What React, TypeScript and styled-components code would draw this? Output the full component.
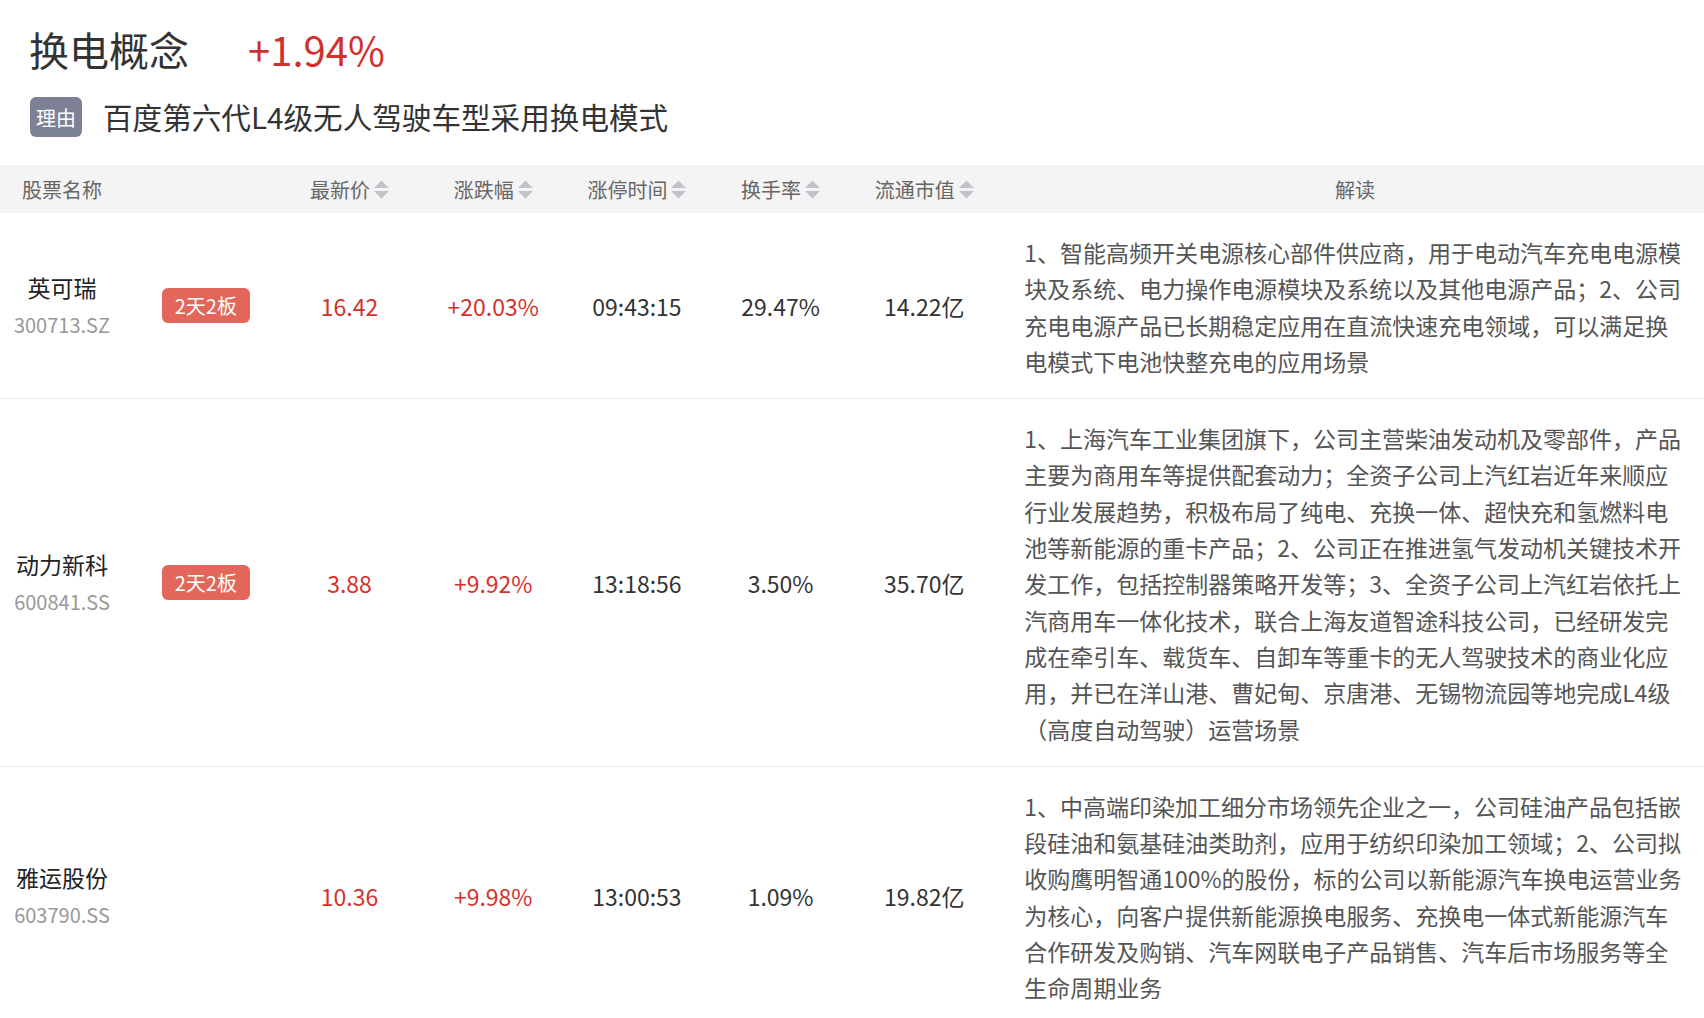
import React from "react";
import styled, { createGlobalStyle } from "styled-components";

const GlobalStyle = createGlobalStyle`
  html, body {
    margin: 0;
    padding: 0;
    overflow: hidden;
    background: #ffffff;
  }
  body {
    font-family: "Noto Sans CJK SC", "Noto Sans", sans-serif;
    color: #333333;
  }
`;

const COLS = "134px repeat(6, 143.7px) 1fr";

const Page = styled.div`
  width: 1704px;
`;

const Top = styled.div`
  padding: 21px 0 0 30px;
`;

const TitleRow = styled.div`
  display: flex;
  align-items: center;
  height: 56px;
`;

const Title = styled.h1`
  margin: 0 0 0 -1px;
  font-size: 40px;
  font-weight: 400;
  line-height: 56px;
  color: #333333;
`;

const Change = styled.span`
  margin-left: 59px;
  font-size: 40px;
  line-height: 56px;
  color: #d0312d;
`;

const ReasonRow = styled.div`
  display: flex;
  align-items: center;
  gap: 21px;
  margin-top: 20px;
  height: 40px;
`;

const ReasonTag = styled.span`
  display: inline-flex;
  align-items: center;
  justify-content: center;
  width: 52px;
  height: 40px;
  border-radius: 6px;
  background: #7d8196;
  color: #ffffff;
  font-size: 20px;
`;

const ReasonText = styled.span`
  font-size: 29.6px;
  line-height: 40px;
  color: #333333;
`;

const Table = styled.div`
  margin-top: 28px;
`;

const HeadRow = styled.div`
  display: grid;
  grid-template-columns: ${COLS};
  height: 48px;
  background: #f4f4f4;
`;

const HeadCell = styled.div<{ $first?: boolean; $desc?: boolean }>`
  display: flex;
  align-items: center;
  justify-content: center;
  gap: 4px;
  font-size: 20px;
  color: #666666;
  padding: ${(p) => (p.$first ? "0 10px 0 0" : p.$desc ? "0 18px 0 28px" : "0")};
`;

const SortSvg = styled.svg`
  width: 15px;
  height: 19px;
  flex: none;
`;

const SortIcon = () => (
  <SortSvg viewBox="0 0 15 19">
    <polygon points="0,8 7.5,0.5 15,8" fill="#c0c3ca" />
    <polygon points="0,11 15,11 7.5,18.5" fill="#c0c3ca" />
  </SortSvg>
);

const Row = styled.div`
  display: grid;
  grid-template-columns: ${COLS};
  border-bottom: 1px solid #ebebeb;
`;

const NameCell = styled.div`
  display: flex;
  flex-direction: column;
  align-items: center;
  justify-content: center;
  padding-right: 10px;
`;

const Name = styled.div`
  font-size: 23px;
  line-height: 37px;
  color: #222222;
`;

const Code = styled.div`
  font-size: 20px;
  line-height: 37px;
  color: #999999;
`;

const TagCell = styled.div`
  display: flex;
  align-items: center;
  justify-content: center;
`;

const Tag = styled.span`
  display: inline-flex;
  align-items: center;
  justify-content: center;
  width: 88px;
  height: 35px;
  border-radius: 6px;
  background: #e3665b;
  color: #ffffff;
  font-size: 20px;
`;

const ValueCell = styled.div<{ $up?: boolean }>`
  display: flex;
  align-items: center;
  justify-content: center;
  font-size: 23px;
  color: ${(p) => (p.$up ? "#d4322d" : "#333333")};
`;

const DescCell = styled.div`
  padding: 21px 18px 19px 28px;
  font-size: 23px;
  line-height: 36.3px;
  color: #555555;
  text-align: left;
`;

type Stock = {
  name: string;
  code: string;
  tag?: string;
  price: string;
  change: string;
  time: string;
  turnover: string;
  cap: string;
  desc: string;
};

const stocks: Stock[] = [
  {
    name: "英可瑞",
    code: "300713.SZ",
    tag: "2天2板",
    price: "16.42",
    change: "+20.03%",
    time: "09:43:15",
    turnover: "29.47%",
    cap: "14.22亿",
    desc: "1、智能高频开关电源核心部件供应商，用于电动汽车充电电源模块及系统、电力操作电源模块及系统以及其他电源产品；2、公司充电电源产品已长期稳定应用在直流快速充电领域，可以满足换电模式下电池快整充电的应用场景",
  },
  {
    name: "动力新科",
    code: "600841.SS",
    tag: "2天2板",
    price: "3.88",
    change: "+9.92%",
    time: "13:18:56",
    turnover: "3.50%",
    cap: "35.70亿",
    desc: "1、上海汽车工业集团旗下，公司主营柴油发动机及零部件，产品主要为商用车等提供配套动力；全资子公司上汽红岩近年来顺应行业发展趋势，积极布局了纯电、充换一体、超快充和氢燃料电池等新能源的重卡产品；2、公司正在推进氢气发动机关键技术开发工作，包括控制器策略开发等；3、全资子公司上汽红岩依托上汽商用车一体化技术，联合上海友道智途科技公司，已经研发完成在牵引车、载货车、自卸车等重卡的无人驾驶技术的商业化应用，并已在洋山港、曹妃甸、京唐港、无锡物流园等地完成L4级（高度自动驾驶）运营场景",
  },
  {
    name: "雅运股份",
    code: "603790.SS",
    price: "10.36",
    change: "+9.98%",
    time: "13:00:53",
    turnover: "1.09%",
    cap: "19.82亿",
    desc: "1、中高端印染加工细分市场领先企业之一，公司硅油产品包括嵌段硅油和氨基硅油类助剂，应用于纺织印染加工领域；2、公司拟收购鹰明智通100%的股份，标的公司以新能源汽车换电运营业务为核心，向客户提供新能源换电服务、充换电一体式新能源汽车合作研发及购销、汽车网联电子产品销售、汽车后市场服务等全生命周期业务",
  },
];

const sortable = ["最新价", "涨跌幅", "涨停时间", "换手率", "流通市值"];

export default function App() {
  return (
    <Page>
      <GlobalStyle />
      <Top>
        <TitleRow>
          <Title>换电概念</Title>
          <Change>+1.94%</Change>
        </TitleRow>
        <ReasonRow>
          <ReasonTag>理由</ReasonTag>
          <ReasonText>百度第六代L4级无人驾驶车型采用换电模式</ReasonText>
        </ReasonRow>
      </Top>
      <Table>
        <HeadRow>
          <HeadCell $first>股票名称</HeadCell>
          <HeadCell />
          {sortable.map((h) => (
            <HeadCell key={h}>
              {h}
              <SortIcon />
            </HeadCell>
          ))}
          <HeadCell $desc>解读</HeadCell>
        </HeadRow>
        {stocks.map((s) => (
          <Row key={s.code}>
            <NameCell>
              <Name>{s.name}</Name>
              <Code>{s.code}</Code>
            </NameCell>
            <TagCell>{s.tag && <Tag>{s.tag}</Tag>}</TagCell>
            <ValueCell $up>{s.price}</ValueCell>
            <ValueCell $up>{s.change}</ValueCell>
            <ValueCell>{s.time}</ValueCell>
            <ValueCell>{s.turnover}</ValueCell>
            <ValueCell>{s.cap}</ValueCell>
            <DescCell>{s.desc}</DescCell>
          </Row>
        ))}
      </Table>
    </Page>
  );
}
